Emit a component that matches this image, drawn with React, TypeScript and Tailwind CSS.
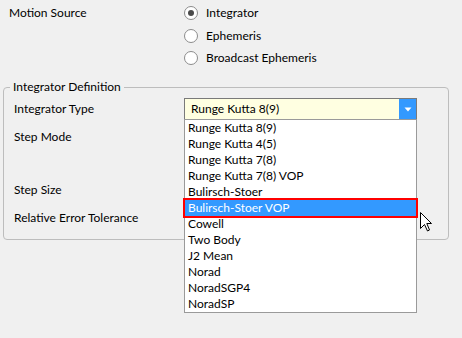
import React from "react";

const items = [
  "Runge Kutta 8(9)",
  "Runge Kutta 4(5)",
  "Runge Kutta 7(8)",
  "Runge Kutta 7(8) VOP",
  "Bulirsch-Stoer",
  "Bulirsch-Stoer VOP",
  "Cowell",
  "Two Body",
  "J2 Mean",
  "Norad",
  "NoradSGP4",
  "NoradSP",
];

function Radio({ label, checked }: { label: string; checked?: boolean }) {
  return (
    <div className="h-[22.5px] flex items-center">
      <div className="w-[14px] h-[14px] rounded-full border border-[#8c8c8c] bg-white flex items-center justify-center">
        {checked && <div className="w-[6px] h-[6px] rounded-full bg-[#4a4a4a]" />}
      </div>
      <span className="ml-[8px]">{label}</span>
    </div>
  );
}

export default function App() {
  return (
    <div
      className="w-[462px] h-[338px] bg-[#f0f0f0] overflow-hidden relative text-[12px] text-black"
      style={{ fontFamily: "Lato, 'Open Sans', sans-serif" }}
    >
      <div className="pt-[2px] flex">
        <div className="w-[184px] pl-[9px]">
          <div className="h-[22.5px] flex items-center">Motion Source</div>
        </div>
        <div className="flex flex-col">
          <Radio label="Integrator" checked />
          <Radio label="Ephemeris" />
          <Radio label="Broadcast Ephemeris" />
        </div>
      </div>

      <div className="mt-[17.5px] ml-[3px] w-[446px] h-[153px] border border-[#bdbdbd] rounded-[4px] relative">
        <div className="absolute left-[6px] -top-[9px] px-[3px] bg-[#f0f0f0] leading-[16px]">
          Integrator Definition
        </div>
        <div className="pt-[10px] pl-[10px] flex flex-col">
          <div className="h-[22px] flex items-center">
            <div className="w-[170px]">Integrator Type</div>
            <div className="w-[233px] h-[22px] relative border border-[#7a7a7a] bg-[#ffffe1] flex items-center">
              <span className="pl-[6px] flex-1">Runge Kutta 8(9)</span>
              <div className="w-[17px] h-full bg-[#3399ff] flex items-center justify-center">
                <svg width="8" height="5" viewBox="0 0 8 5">
                  <path d="M0.5 0.5 H7.5 L4 4.5 Z" fill="#ffffff" />
                </svg>
              </div>
              <div className="absolute -left-px top-[20px] w-[233px] border border-[#9a9a9a] bg-white z-10">
                {items.map((it, i) =>
                  i === 5 ? (
                    <div key={it} className="h-[16px] leading-[16px] pl-[3px] bg-[#3399ff] text-white relative">
                      {it}
                      <div className="absolute -left-[2px] -right-[2px] -top-[2px] -bottom-[2px] border-2 border-[#ff0000]" />
                    </div>
                  ) : (
                    <div key={it} className="h-[16px] leading-[16px] pl-[3px]">
                      {it}
                    </div>
                  )
                )}
              </div>
            </div>
          </div>
          <div className="h-[22px] mt-[6px] flex items-center">Step Mode</div>
          <div className="h-[22px] mt-[31px] flex items-center">Step Size</div>
          <div className="h-[22px] mt-[6px] flex items-center">Relative Error Tolerance</div>
        </div>
      </div>

      <svg
        className="absolute left-[420px] top-[212px] z-20"
        width="13"
        height="20"
        viewBox="0 0 13 20"
      >
        <path
          d="M0.5 0.5 L0.5 16.5 L4.5 12.5 L7.5 19 L9.5 18 L6.8 11.5 L11.5 11.5 Z"
          fill="#ffffff"
          stroke="#000000"
          strokeWidth="1"
          strokeLinejoin="miter"
        />
      </svg>
    </div>
  );
}
